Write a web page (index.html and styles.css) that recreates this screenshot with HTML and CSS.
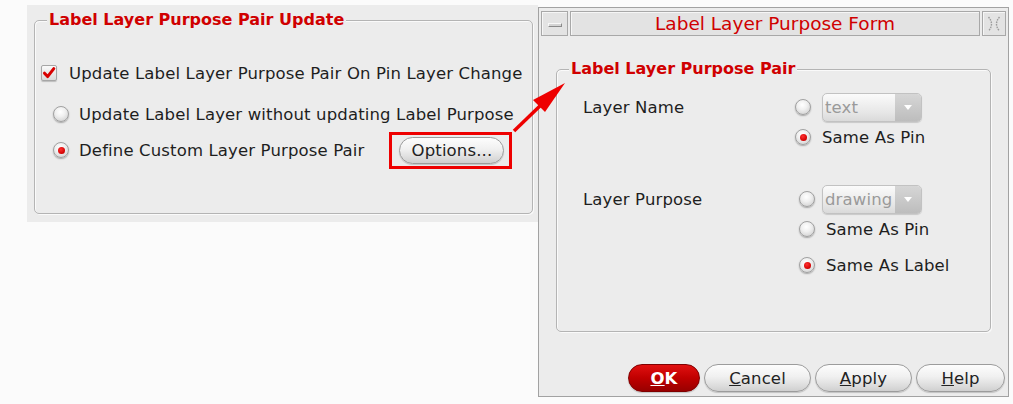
FILE: index.html
```html
<!DOCTYPE html>
<html>
<head>
<meta charset="utf-8">
<link rel="stylesheet" href="styles.css">
</head>
<body>
<div class="screen">
  <section class="panel">
    <div class="group group-left">
      <div class="legend">Label Layer Purpose Pair Update</div>
      <div class="row row-check">
        <span class="checkbox"><svg width="14" height="14" viewBox="0 0 14 14"><path d="M2.5 7.2 L5.6 10.6 L11.8 2.6" fill="none" stroke="#d80000" stroke-width="3" stroke-linecap="round" stroke-linejoin="round"/></svg></span>
        <span class="lbl">Update Label Layer Purpose Pair On Pin Layer Change</span>
      </div>
      <div class="row row-r1">
        <span class="radio"></span>
        <span class="lbl">Update Label Layer without updating Label Purpose</span>
      </div>
      <div class="row row-r2">
        <span class="radio on"></span>
        <span class="lbl">Define Custom Layer Purpose Pair</span>
        <span class="highlight"><span class="btn btn-options">Options...</span></span>
      </div>
    </div>
  </section>

  <section class="dialog">
    <div class="titlebar">
      <div class="tb tb-min"><span class="min-glyph"></span></div>
      <div class="tb tb-title">Label Layer Purpose Form</div>
      <div class="tb tb-close">
        <svg width="16" height="18" viewBox="0 0 16 18"><path d="M2.5 2 Q8.5 9 2.5 16 M13.5 2 Q7.5 9 13.5 16" fill="none" stroke="#9c9c9c" stroke-width="1.4" stroke-dasharray="1.6 1"/></svg>
      </div>
    </div>
    <div class="group group-right">
      <div class="legend">Label Layer Purpose Pair</div>
      <div class="frow fr1">
        <span class="flabel">Layer Name</span>
        <span class="ctl"><span class="radio"></span><span class="select"><span class="sel-text">text</span><span class="sel-arr"><svg width="8" height="5" viewBox="0 0 8 5"><path d="M0 0 H8 L4 5 Z" fill="#fff"/></svg></span></span></span>
      </div>
      <div class="frow fr2">
        <span class="flabel"></span>
        <span class="ctl"><span class="radio on"></span><span class="opt">Same As Pin</span></span>
      </div>
      <div class="frow fr3">
        <span class="flabel">Layer Purpose</span>
        <span class="ctl shift"><span class="radio"></span><span class="select"><span class="sel-text">drawing</span><span class="sel-arr"><svg width="8" height="5" viewBox="0 0 8 5"><path d="M0 0 H8 L4 5 Z" fill="#fff"/></svg></span></span></span>
      </div>
      <div class="frow fr4">
        <span class="flabel"></span>
        <span class="ctl shift"><span class="radio"></span><span class="opt">Same As Pin</span></span>
      </div>
      <div class="frow fr5">
        <span class="flabel"></span>
        <span class="ctl shift"><span class="radio on"></span><span class="opt">Same As Label</span></span>
      </div>
    </div>
    <div class="buttons">
      <span class="btn btn-ok"><u>O</u>K</span>
      <span class="btn btn-cancel"><u>C</u>ancel</span>
      <span class="btn btn-apply"><u>A</u>pply</span>
      <span class="btn btn-help"><u>H</u>elp</span>
    </div>
  </section>
</div>
<svg class="arrow" width="80" height="70" viewBox="500 75 80 70">
  <line x1="514" y1="131" x2="542" y2="104" stroke="#ee0000" stroke-width="3.5"/>
  <polygon points="565,83 533,100 545,112" fill="#ee0000"/>
</svg>
</body>
</html>
```

FILE: styles.css
```css
html, body {
  margin: 0;
  padding: 0;
  background: #fbfbfb;
  font-family: "DejaVu Sans", "Liberation Sans", sans-serif;
  color: #1e1e1e;
}

.screen {
  display: flex;
  align-items: flex-start;
  padding-left: 27px;
  width: 1013px;
  height: 404px;
  box-sizing: border-box;
  position: relative;
}

/* ---------- left panel ---------- */
.panel {
  margin-top: 5px;
  width: 511px;
  height: 217px;
  box-sizing: border-box;
  padding: 15px 5px 0 7px;
  background: #ececec;
}

.group {
  box-sizing: border-box;
  border: 1px solid #b4b4b4;
  border-radius: 5px;
  box-shadow: inset 1px 1px 0 #fafafa, 1px 1px 0 #fafafa;
}

.group-left {
  width: 499px;
  height: 194px;
}

.legend {
  display: block;
  width: max-content;
  margin-top: -11px;
  margin-left: 12px;
  padding: 0 2px;
  height: 20px;
  line-height: 20px;
  font-size: 16px;
  font-weight: bold;
  color: #d00000;
  background: #ececec;
}

.row {
  display: flex;
  align-items: center;
  font-size: 16.5px;
  letter-spacing: 0.14px;
  height: 24px;
}

.row-check {
  margin-top: 31px;
  padding-left: 6px;
}

.row-r1 {
  margin-top: 17px;
  padding-left: 18px;
}

.row-r2 {
  margin-top: 12px;
  padding-left: 18px;
}

.row-check .lbl { margin-left: 12px; }
.row-r1 .lbl, .row-r2 .lbl { margin-left: 10px; }

.checkbox {
  width: 16px;
  height: 16px;
  box-sizing: border-box;
  border: 1px solid #a6a6a6;
  border-radius: 2px;
  background: linear-gradient(#fafafa, #dadada);
  display: flex;
  align-items: center;
  justify-content: center;
  box-shadow: 0 1px 1px rgba(0,0,0,0.2);
}

.radio {
  flex: none;
  width: 16px;
  height: 16px;
  box-sizing: border-box;
  border-radius: 50%;
  border: 1px solid #a0a0a0;
  background: radial-gradient(circle at 45% 35%, #ffffff 0%, #f0f0f0 40%, #c8c8c8 100%);
  box-shadow: 0 1px 1.5px rgba(0,0,0,0.3);
  position: relative;
}

.radio.on::after {
  content: "";
  position: absolute;
  left: 3.5px;
  top: 3.5px;
  width: 7px;
  height: 7px;
  border-radius: 50%;
  background: radial-gradient(circle at 40% 35%, #ff3030, #d00000 70%, #a00000);
}

.highlight {
  margin-left: 25px;
  border: 3px solid #ee0000;
  padding: 2px 5px 2px 7px;
  display: flex;
}

.btn {
  display: flex;
  align-items: center;
  justify-content: center;
  box-sizing: border-box;
  height: 27px;
  border: 1px solid #9c9c9c;
  border-radius: 14px;
  background: linear-gradient(#fdfdfd 0%, #f0f0f0 45%, #dcdcdc 80%, #cfcfcf 100%);
  box-shadow: 0 1px 1px rgba(0,0,0,0.18);
  font-size: 16.5px;
  letter-spacing: 0.14px;
  color: #222;
}

.btn-options { width: 105px; }

/* ---------- dialog ---------- */
.dialog {
  margin-top: 7px;
  width: 471px;
  height: 390px;
  box-sizing: border-box;
  border: 1px solid #a2a2a2;
  padding: 3px 2px 0 2px;
  background: #ececec;
  display: flex;
  flex-direction: column;
}

.titlebar {
  display: flex;
  gap: 2px;
  height: 25px;
}

.tb {
  box-sizing: border-box;
  border: 1px solid #a8a8a8;
  background: #e3e3e3;
  box-shadow: inset 1px 1px 0 #f6f6f6;
  display: flex;
  align-items: center;
  justify-content: center;
}

.tb-min { width: 27px; }
.tb-close { width: 24px; }
.tb-title {
  flex: 1;
  font-size: 18.5px;
  color: #d00000;
}

.min-glyph {
  width: 14px;
  height: 4px;
  box-sizing: border-box;
  border: 1px solid #a0a0a0;
  border-color: #f8f8f8 #8a8a8a #8a8a8a #f8f8f8;
  background: #d4d4d4;
  margin-top: 2px;
}

.group-right {
  margin: 33px 15px 0 15px;
  height: 263px;
  padding-left: 26px;
}

.group-right .legend {
  margin-left: -14px;
}

.frow {
  display: grid;
  grid-template-columns: 212px auto;
  align-items: center;
  font-size: 16.5px;
  letter-spacing: 0.14px;
}

.fr1 { margin-top: 13px; height: 30px; }
.fr2 { margin-top: 3px; height: 24px; }
.fr3 { margin-top: 35px; height: 30px; }
.fr4 { margin-top: 3px; height: 24px; }
.fr5 { margin-top: 12px; height: 24px; }

.ctl {
  display: flex;
  align-items: center;
}

.ctl.shift { padding-left: 4px; }

.opt { margin-left: 11px; }

.select {
  margin-left: 11px;
  width: 100px;
  height: 29px;
  box-sizing: border-box;
  border: 1px solid #c2c2c2;
  border-radius: 5px;
  background: linear-gradient(#fbfbfb, #e6e6e6 70%, #dadada);
  display: flex;
  overflow: hidden;
  box-shadow: 0 1px 1px rgba(0,0,0,0.15);
}

.ctl.shift .select { margin-left: 7px; }

.sel-text {
  flex: 1;
  padding-left: 2px;
  color: #9a9a9a;
  line-height: 27px;
}

.sel-arr {
  width: 26px;
  background: linear-gradient(#d6d6d6, #bdbdbd);
  display: flex;
  align-items: center;
  justify-content: center;
}

.buttons {
  display: flex;
  justify-content: flex-end;
  gap: 4px;
  margin-top: 32px;
  padding-right: 1px;
}

.buttons .btn { height: 28px; }
.btn-ok {
  width: 72px;
  background: linear-gradient(#e01010 0%, #c00000 50%, #980000 100%);
  border-color: #800000;
  color: #fff;
  font-weight: bold;
}
.btn-cancel { width: 107px; }
.btn-apply { width: 97px; }
.btn-help { width: 89px; }

/* annotation arrow */
.arrow {
  position: absolute;
  left: 500px;
  top: 75px;
}
```
